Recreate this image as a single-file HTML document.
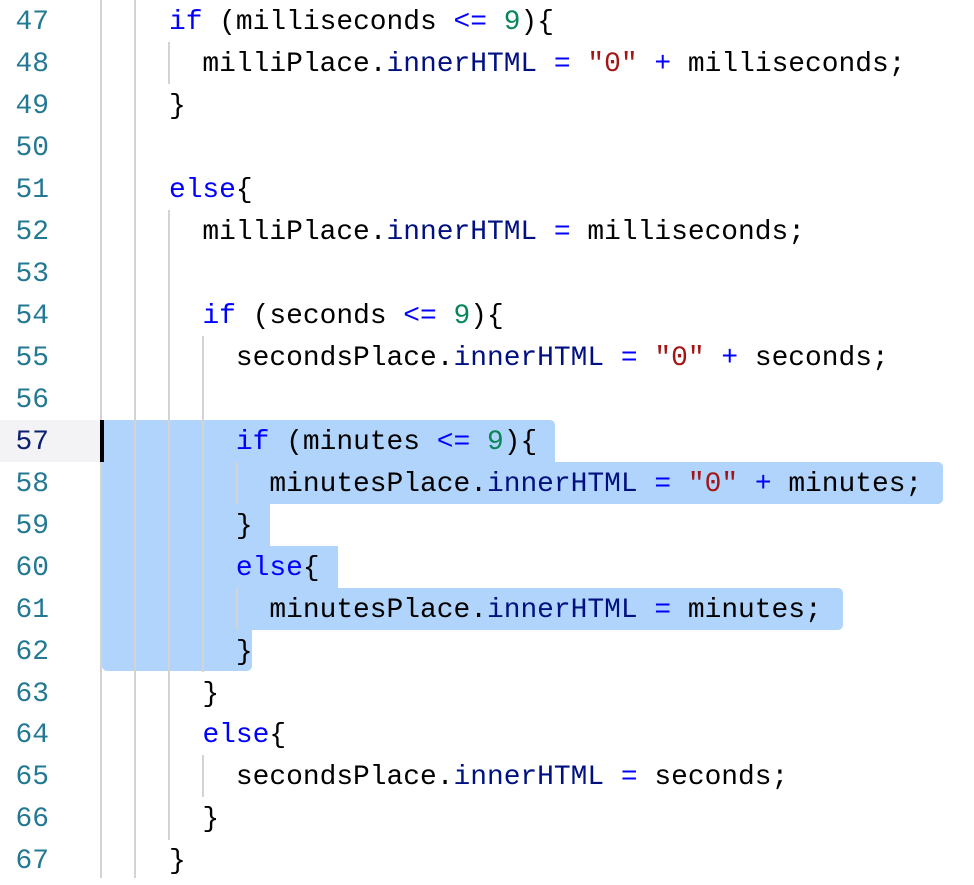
<!DOCTYPE html><html><head><style>
body{margin:0;width:974px;height:878px;background:#fff;overflow:hidden;position:relative;font-family:"Liberation Mono",monospace;font-size:27.9px}
.row{position:absolute;left:0;height:42px;line-height:46px;width:974px}
.ln{position:absolute;left:0;width:49px;text-align:right;color:#237893}
.code{position:absolute;left:102px;white-space:pre;color:#000}
.g{position:absolute;width:2px;background:#d3d3d3}
.sel{position:absolute;background:#b0d4fb;border-radius:5px}
.k{color:#0000ff}.p{color:#001080}.n{color:#098658}.s{color:#a31515}
</style></head><body>
<div style="position:absolute;left:0;top:420px;width:100px;height:42px;background:#f3f3f5"></div>
<div class="sel" style="left:102px;top:420px;width:453px;height:42px;border-radius:0 5px 0 0"></div>
<div class="sel" style="left:102px;top:462px;width:841px;height:42px;border-radius:0 5px 5px 0"></div>
<div class="sel" style="left:102px;top:504px;width:168px;height:42px;border-radius:0"></div>
<div class="sel" style="left:102px;top:546px;width:236px;height:42px;border-radius:0"></div>
<div class="sel" style="left:102px;top:588px;width:741px;height:42px;border-radius:0 5px 5px 0"></div>
<div class="sel" style="left:102px;top:630px;width:150px;height:41px;border-radius:0 0 5px 5px"></div>
<div class="g" style="left:100px;top:0;height:878px"></div>
<div class="g" style="left:134px;top:0;height:878px"></div>
<div class="g" style="left:168px;top:42px;height:42px"></div>
<div class="g" style="left:168px;top:210px;height:630px"></div>
<div class="g" style="left:202px;top:336px;height:336px"></div>
<div class="g" style="left:202px;top:755px;height:42px"></div>
<div class="g" style="left:236px;top:462px;height:42px"></div>
<div class="g" style="left:236px;top:588px;height:42px"></div>
<div style="position:absolute;left:100px;top:420px;width:4px;height:42px;background:#000"></div>
<div class="row" style="top:0px"><span class="ln">47</span><span class="code">    <span class="k">if</span> (milliseconds <span class="k">&lt;=</span> <span class="n">9</span>){</span></div>
<div class="row" style="top:42px"><span class="ln">48</span><span class="code">      milliPlace.<span class="p">innerHTML</span> <span class="k">=</span> <span class="s">"0"</span> <span class="k">+</span> milliseconds;</span></div>
<div class="row" style="top:84px"><span class="ln">49</span><span class="code">    }</span></div>
<div class="row" style="top:126px"><span class="ln">50</span></div>
<div class="row" style="top:168px"><span class="ln">51</span><span class="code">    <span class="k">else</span>{</span></div>
<div class="row" style="top:210px"><span class="ln">52</span><span class="code">      milliPlace.<span class="p">innerHTML</span> <span class="k">=</span> milliseconds;</span></div>
<div class="row" style="top:252px"><span class="ln">53</span></div>
<div class="row" style="top:294px"><span class="ln">54</span><span class="code">      <span class="k">if</span> (seconds <span class="k">&lt;=</span> <span class="n">9</span>){</span></div>
<div class="row" style="top:336px"><span class="ln">55</span><span class="code">        secondsPlace.<span class="p">innerHTML</span> <span class="k">=</span> <span class="s">"0"</span> <span class="k">+</span> seconds;</span></div>
<div class="row" style="top:378px"><span class="ln">56</span></div>
<div class="row" style="top:420px"><span class="ln" style="color:#0b216f">57</span><span class="code">        <span class="k">if</span> (minutes <span class="k">&lt;=</span> <span class="n">9</span>){</span></div>
<div class="row" style="top:462px"><span class="ln">58</span><span class="code">          minutesPlace.<span class="p">innerHTML</span> <span class="k">=</span> <span class="s">"0"</span> <span class="k">+</span> minutes;</span></div>
<div class="row" style="top:504px"><span class="ln">59</span><span class="code">        }</span></div>
<div class="row" style="top:546px"><span class="ln">60</span><span class="code">        <span class="k">else</span>{</span></div>
<div class="row" style="top:588px"><span class="ln">61</span><span class="code">          minutesPlace.<span class="p">innerHTML</span> <span class="k">=</span> minutes;</span></div>
<div class="row" style="top:630px"><span class="ln">62</span><span class="code">        }</span></div>
<div class="row" style="top:672px"><span class="ln">63</span><span class="code">      }</span></div>
<div class="row" style="top:713px"><span class="ln">64</span><span class="code">      <span class="k">else</span>{</span></div>
<div class="row" style="top:755px"><span class="ln">65</span><span class="code">        secondsPlace.<span class="p">innerHTML</span> <span class="k">=</span> seconds;</span></div>
<div class="row" style="top:797px"><span class="ln">66</span><span class="code">      }</span></div>
<div class="row" style="top:839px"><span class="ln">67</span><span class="code">    }</span></div>
</body></html>
